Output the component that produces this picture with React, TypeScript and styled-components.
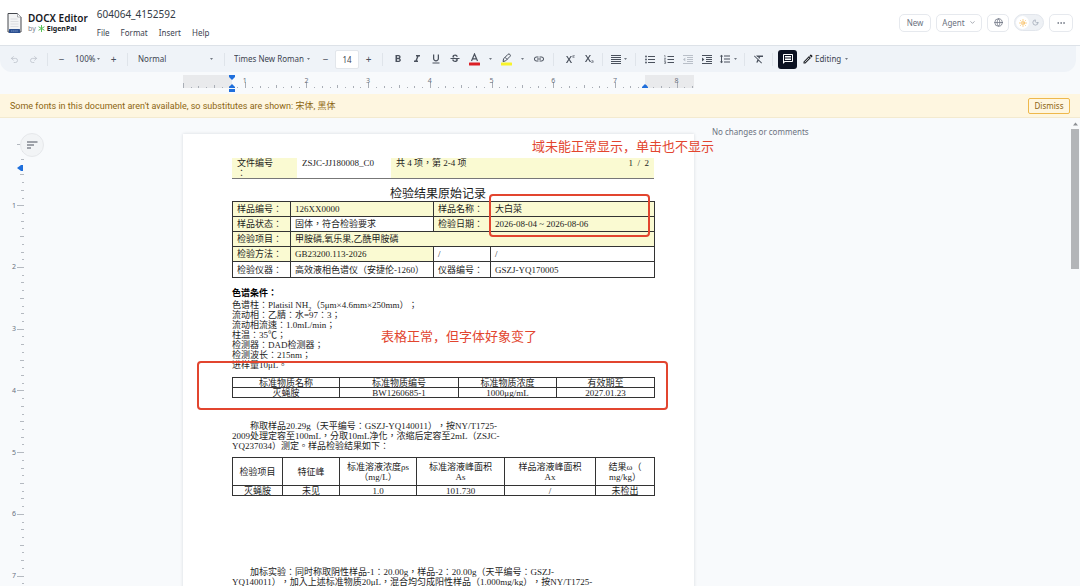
import React from "react";
import styled, { createGlobalStyle, css } from "styled-components";
import {
  MdFormatBold,
  MdFormatItalic,
  MdFormatUnderlined,
  MdStrikethroughS,
  MdLink,
  MdSuperscript,
  MdSubscript,
  MdFormatLineSpacing,
  MdFormatClear,
  MdOutlineMessage,
  MdOutlineEdit,
} from "react-icons/md";
import { Globe, Sun, Moon, Ellipsis, ChevronDown, Undo2, Redo2 } from "lucide-react";

const ui = `"Noto Sans", "Noto Sans CJK SC", sans-serif`;
const serif = `"Liberation Serif", "Noto Sans CJK TC", serif`;

const GlobalStyle = createGlobalStyle`
  *, *::before, *::after { box-sizing: border-box; }
  body { margin: 0; background: #f8fafc; font-family: ${ui}; font-size: 8px; color: #3c4350; }
  button, input, select { font: inherit; color: inherit; margin: 0; padding: 0; border: 0; background: none; }
  h1, h2, p { margin: 0; font-weight: normal; }
`;

const Shell = styled.div`
  display: flex;
  flex-direction: column;
  height: 100vh;
  overflow: hidden;
`;

/* ---------- title bar ---------- */

const TitleBar = styled.header`
  display: flex;
  align-items: center;
  justify-content: space-between;
  height: 46px;
  padding: 0 7px 0 7px;
  background: #fff;
  border-bottom: 1px solid #dde2e8;
`;

const Row = styled.div<{ $gap?: number }>`
  display: flex;
  align-items: center;
  gap: ${(p) => p.$gap ?? 0}px;
`;

const Brand = styled.a`
  display: flex;
  align-items: center;
  gap: 6px;
  color: #16181d;
  text-decoration: none;
`;

const BrandText = styled.span`
  display: flex;
  flex-direction: column;
`;

const BrandName = styled.strong`
  font-size: 10px;
  line-height: 12px;
  font-weight: 600;
  white-space: nowrap;
`;

const Byline = styled.span`
  display: flex;
  align-items: center;
  gap: 2px;
  font-size: 7px;
  line-height: 10px;
  color: #7b828e;

  b {
    color: #16181d;
  }
`;

const FileBlock = styled.div`
  display: flex;
  flex-direction: column;
  gap: 7px;
`;

const FileName = styled.h1`
  font-size: 10px;
  line-height: 14px;
  color: #333a45;
`;

const Menu = styled.nav`
  display: flex;
  gap: 11px;
  line-height: 10px;
`;

const MenuButton = styled.button`
  line-height: 10px;
`;

const PillButton = styled.button<{ $w: number }>`
  display: flex;
  align-items: center;
  justify-content: center;
  gap: 4px;
  width: ${(p) => p.$w}px;
  height: 18px;
  border: 1px solid #e6e9ee;
  border-radius: 5px;
  background: #fff;
  color: #6b7280;
`;

const ThemeSwitch = styled.div`
  display: flex;
  align-items: center;
  width: 30px;
  height: 17px;
  padding: 1px;
  border: 1px solid #e2e6ec;
  border-radius: 9px;
  background: #eef1f5;
`;

const ThemeButton = styled.button<{ $on?: boolean }>`
  display: flex;
  align-items: center;
  justify-content: center;
  width: 14px;
  height: 13px;
  border-radius: 7px;
  background: ${(p) => (p.$on ? "#fff" : "transparent")};
  color: ${(p) => (p.$on ? "#f5a524" : "#8a94a3")};
`;

/* ---------- toolbar ---------- */

const Toolbar = styled.div`
  display: flex;
  align-items: center;
  height: 26px;
  margin-right: 4px;
  padding-left: 5px;
  border-radius: 0 0 12px 12px;
  background: #eff3f8;
`;

const Group = styled.div<{ $pad?: number }>`
  display: flex;
  align-items: center;
  padding: 0 ${(p) => p.$pad ?? 0}px;
`;

const Divider = styled.span`
  width: 1px;
  height: 13px;
  margin: 0 4px;
  background: #dfe4ea;
`;

const ToolButton = styled.button<{ $w?: number; $active?: boolean }>`
  display: flex;
  flex: none;
  align-items: center;
  justify-content: center;
  gap: 3px;
  width: ${(p) => p.$w ?? 19}px;
  height: 19px;
  border-radius: 3px;
  font-size: 10px;
  color: #4a515d;

  &:disabled {
    color: #b9bfc8;
  }

  ${(p) =>
    p.$active &&
    css`
      background: #0c1222;
      color: #fff;
    `}
`;

const SelectBox = styled.label<{ $w: number; $pad?: number; $end?: number }>`
  display: flex;
  flex: none;
  align-items: center;
  gap: 1px;
  width: ${(p) => p.$w}px;
  height: 19px;
  padding: 0 ${(p) => p.$end ?? 4}px 0 ${(p) => p.$pad ?? 6}px;

  select {
    flex: 1;
    min-width: 0;
    appearance: none;
    outline: none;
    line-height: 12px;
  }
`;

const SizeInput = styled.input`
  width: 24px;
  height: 19px;
  border: 1px solid #e2e6eb;
  border-radius: 2px;
  background: #fff;
  text-align: center;
`;

const Caret = () => (
  <svg width="3" height="2" viewBox="0 0 4 2" aria-hidden="true">
    <path d="M0 0h4L2 2z" fill="#4a515d" />
  </svg>
);

/* ---------- rulers ---------- */

const PageGrid = styled.div`
  display: grid;
  grid-template-columns: minmax(24px, 183fr) 511px minmax(0, 386fr);
`;

const RulerBar = styled(PageGrid)`
  height: 22px;
  flex: none;
  padding-top: 3px;

  svg {
    grid-column: 2;
    overflow: visible;
  }
`;

const INCH = 61.7;

const HorizontalRuler = () => (
  <svg width="511" height="18" role="img" aria-label="Horizontal ruler">
    <rect x="0" y="0" width="49" height="13" fill="#e9eaec" />
    <rect x="462" y="0" width="49" height="13" fill="#e9eaec" />
    {Array.from({ length: 67 }, (_, i) => {
      const h = i % 8 === 0 ? (i === 0 ? 5 : 6) : i % 4 === 0 ? 3 : i % 2 === 0 ? 2 : 1;
      return (
        <rect key={i} x={Math.round((i * INCH) / 8)} y={13 - h} width="1" height={h} fill="#a9aeb6" />
      );
    })}
    {[1, 2, 3, 4, 5, 6, 7, 8].map((n) => (
      <text key={n} x={n * INCH} y="8" fontSize="7" textAnchor="middle" fill="#6b7280">
        {n}
      </text>
    ))}
    <path d="M46 0h6v2l-3 3-3-3z" fill="#1f6fdc" />
    <path d="M49 9l3 3v1h-6v-1z" fill="#1f6fdc" />
    <rect x="46" y="14" width="6" height="3" fill="#1f6fdc" />
    <path d="M462 9l3 3v1h-6v-1z" fill="#1f6fdc" />
  </svg>
);

const VerticalRuler = () => (
  <svg width="24" height="468" role="img" aria-label="Vertical ruler">
    {Array.from({ length: 58 }, (_, i) => {
      const w = i % 8 === 0 ? 7 : i % 4 === 0 ? 4 : i % 2 === 0 ? 3 : 2;
      return i === 3 ? null : (
        <rect key={i} x={24 - w} y={Math.round(25.600 + (i * INCH) / 8)} width={w} height="1" fill="#b4b9c0" />
      );
    })}
    {[1, 2, 3, 4, 5, 6, 7].map((n) => (
      <text key={n} x="14" y={28 + n * INCH} fontSize="7" textAnchor="middle" fill="#6b7280">
        {n}
      </text>
    ))}
    <path d="M17 50l4-3h2v6h-2z" fill="#1f6fdc" />
  </svg>
);

/* ---------- notice ---------- */

const Notice = styled.div`
  display: flex;
  flex: none;
  align-items: center;
  justify-content: space-between;
  height: 24px;
  padding: 0 10px;
  background: #fef6e0;
  border-bottom: 1px solid #f3ead0;
  color: #8c6510;
`;

const NoticeText = styled.span`
  font-family: Roboto, "Noto Sans CJK SC", sans-serif;
  font-size: 9px;
  line-height: 12px;
`;

const DismissButton = styled.button`
  width: 42px;
  height: 16px;
  border: 1px solid #eeb84c;
  border-radius: 2px;
`;

/* ---------- workspace ---------- */

const Workspace = styled.main`
  position: relative;
  flex: 1;
  min-height: 0;
  overflow: hidden;
`;

const RulerColumn = styled.div`
  position: relative;
`;

const OutlineButton = styled.button`
  position: absolute;
  top: 15px;
  left: 20px;
  display: flex;
  align-items: center;
  justify-content: center;
  width: 24px;
  height: 24px;
  border: 1px solid #e6e8eb;
  border-radius: 50%;
  background: #f2f4f6;
`;

const Page = styled.article`
  position: relative;
  margin-top: 16px;
  min-height: 720px;
  padding: 24px 40px 0 49px;
  background: #fff;
  box-shadow: 0 0 3px rgba(40, 50, 70, 0.16);
  font-family: ${serif};
  font-size: 9px;
  line-height: 10px;
  color: #1c1c1c;
  text-spacing-trim: space-all;
`;

const Comments = styled.aside`
  padding: 8px 12px 0 18px;
  line-height: 12px;
  color: #6b7280;
`;

const ScrollTrack = styled.div`
  position: absolute;
  top: 0;
  right: 0;
  bottom: 0;
  display: flex;
  flex-direction: column;
  align-items: center;
  width: 10px;
  padding-top: 4px;
  gap: 3px;
`;

const ScrollThumb = styled.div`
  width: 8px;
  height: 140px;
  background: #b3b5b8;
`;

const Letterhead = styled.table`
  width: 422px;
  border-collapse: collapse;
  table-layout: fixed;
  border-bottom: 1px solid #777;

  td {
    height: 19px;
    padding: 0 5px;
    vertical-align: top;
    line-height: 10px;
  }
`;

const FormTable = styled.table`
  width: 423px;
  border-collapse: collapse;
  table-layout: fixed;
  text-align: left;

  td {
    height: 15px;
    padding: 0 4px;
    border: 1px solid #333;
    line-height: 10px;
    white-space: nowrap;
  }

  tr:last-child td {
    height: 16px;
  }
`;

const DataTable = styled.table<{ $head: number }>`
  width: 423px;
  border-collapse: collapse;
  table-layout: fixed;
  text-align: center;

  th,
  td {
    height: 10px;
    padding: 1px 0 0;
    border: 1px solid #333;
    font-weight: normal;
    line-height: 8px;
    white-space: nowrap;
  }

  thead th {
    height: ${(p) => p.$head}px;
    line-height: ${(p) => (p.$head > 10 ? 10 : 8)}px;
  }
`;

const Cell = styled.td<{ $fill?: boolean; $right?: boolean }>`
  background: ${(p) => (p.$fill ? "#fafad2" : "transparent")};
  text-align: ${(p) => (p.$right ? "right" : "inherit")};
`;

const DocTitle = styled.h1`
  padding: 8px 10px 0 0;
  font-size: 12px;
  line-height: 14px;
  text-align: center;
`;

const SectionTitle = styled.h2`
  padding-top: 10px;
  font-size: 9px;
  line-height: 10px;
  font-weight: bold;
  color: #000;
`;

const Paragraph = styled.p<{ $top: number; $indent?: boolean }>`
  padding-top: ${(p) => p.$top}px;
  text-indent: ${(p) => (p.$indent ? 18 : 0)}px;
  white-space: nowrap;

  sub {
    font-size: 6px;
    line-height: 0;
  }
`;

const Spacer = styled.div<{ $h: number }>`
  height: ${(p) => p.$h}px;
`;

const Note = styled.span<{ $x: number; $y: number }>`
  position: absolute;
  left: ${(p) => p.$x}px;
  top: ${(p) => p.$y}px;
  font-family: "Noto Sans CJK SC", sans-serif;
  font-size: 13px;
  line-height: 16px;
  white-space: nowrap;
  color: #e2452f;
`;

const Frame = styled.span<{ $x: number; $y: number; $w: number; $h: number }>`
  position: absolute;
  left: ${(p) => p.$x}px;
  top: ${(p) => p.$y}px;
  width: ${(p) => p.$w}px;
  height: ${(p) => p.$h}px;
  border: 2px solid #e2452f;
  border-radius: 4px;
`;

/* ---------- drawings ---------- */

const DocLogo = () => (
  <svg width="15" height="22" viewBox="0 0 15 22" aria-hidden="true">
    <path d="M1 1.500h9.500l3.500 3.500v15H1z" fill="#f3f4f5" stroke="#44474d" />
    <path d="M10.500 1.500V5H14" fill="#fff" stroke="#8b8e94" strokeWidth=".7" />
    <path d="M3.500 7h7M3.500 9.500h8M3.500 12h8M3.500 14.500h8" stroke="#d5d8dc" strokeWidth=".8" />
    <rect x="2" y="17" width="11" height="4" rx=".6" fill="#2b4f8f" />
    <path d="M4 19h7" stroke="#7f9bcf" strokeWidth="1" strokeDasharray="1.500 .6" />
  </svg>
);

const Asterisk = () => (
  <svg width="7" height="7" viewBox="0 0 8 8" aria-hidden="true">
    <path d="M4 .5v7M1 2.200l6 3.600M7 2.200L1 5.800" stroke="#4fc04f" strokeWidth="1.100" strokeLinecap="round" />
  </svg>
);

const TextColor = () => (
  <svg width="11" height="13" viewBox="0 0 11 13" aria-hidden="true">
    <path d="M2.500 8L5.500 1l3 7M3.500 5.800h4" fill="none" stroke="#4a515d" strokeWidth="1.200" />
    <rect x="0" y="9.500" width="11" height="3" rx=".5" fill="#dc1f26" />
  </svg>
);

const Highlighter = () => (
  <svg width="11" height="13" viewBox="0 0 11 13" aria-hidden="true">
    <rect x="0" y="9.500" width="11" height="3" rx=".5" fill="#f8f32b" />
    <path
      d="M2 8.500l.6-2.700L7 1.300q.9-.8 1.900.1t.2 1.900L4.600 7.900zM4 4.300L6.200 6.500"
      fill="none"
      stroke="#4a515d"
      strokeWidth="1"
      strokeLinejoin="round"
    />
  </svg>
);

const LineIcon = ({ d, children }: { d: string; children?: React.ReactNode }) => (
  <svg width="10" height="9" viewBox="0 0 10 9" aria-hidden="true" fill="currentColor">
    <path d={d} stroke="currentColor" strokeWidth="1" />
    {children}
  </svg>
);

const JustifyIcon = () => <LineIcon d="M0 .5h10M0 2.500h10M0 4.500h10M0 6.500h10M0 8.500h10" />;

const BulletIcon = () => (
  <LineIcon d="M3 1.500h7M3 4.500h7M3 7.500h7">
    <circle cx="1" cy="1.500" r=".9" />
    <circle cx="1" cy="4.500" r=".9" />
    <circle cx="1" cy="7.500" r=".9" />
  </LineIcon>
);

const NumberIcon = () => (
  <LineIcon d="M3.500 1.500H10M3.500 4.500H10M3.500 7.500H10">
    <path
      d="M.3.4h.7v2.200M.2 3.500h1.400L.3 5.300h1.500M.2 6.500h1.400v2H.2M.6 7.500h1"
      fill="none"
      stroke="currentColor"
      strokeWidth=".6"
    />
  </LineIcon>
);

const OutdentIcon = () => (
  <LineIcon d="M0 .5h10M4 2.500h6M4 4.500h6M4 6.500h6M0 8.500h10">
    <path d="M2.300 2.500v4L0 4.500z" />
  </LineIcon>
);

const IndentIcon = () => (
  <LineIcon d="M0 .5h10M4 2.500h6M4 4.500h6M4 6.500h6M0 8.500h10">
    <path d="M0 2.500v4l2.300-2z" />
  </LineIcon>
);

const OutlineIcon = () => (
  <svg width="11" height="8" viewBox="0 0 11 8" aria-hidden="true">
    <path d="M0 1h10.500M0 4h7M0 7h4" stroke="#4a515d" strokeWidth="1.200" />
  </svg>
);

export default function App() {
  return (
    <Shell>
      <GlobalStyle />
      <TitleBar>
        <Row $gap={9}>
          <Brand href="#">
            <DocLogo />
            <BrandText>
              <BrandName>DOCX Editor</BrandName>
              <Byline>
                by <Asterisk /> <b>EigenPal</b>
              </Byline>
            </BrandText>
          </Brand>
          <FileBlock>
            <FileName>604064_4152592</FileName>
            <Menu>
              <MenuButton>File</MenuButton>
              <MenuButton>Format</MenuButton>
              <MenuButton>Insert</MenuButton>
              <MenuButton>Help</MenuButton>
            </Menu>
          </FileBlock>
        </Row>
        <Row $gap={5}>
          <PillButton $w={32}>New</PillButton>
          <PillButton $w={46}>
            Agent <ChevronDown size={7} />
          </PillButton>
          <PillButton $w={22} aria-label="Language">
            <Globe size={9} />
          </PillButton>
          <ThemeSwitch>
            <ThemeButton $on aria-label="Light theme">
              <Sun size={8} />
            </ThemeButton>
            <ThemeButton aria-label="Dark theme">
              <Moon size={7} />
            </ThemeButton>
          </ThemeSwitch>
          <PillButton $w={24} aria-label="More">
            <Ellipsis size={10} />
          </PillButton>
        </Row>
      </TitleBar>

      <Toolbar role="toolbar" aria-label="Formatting">
        <Group>
          <ToolButton disabled aria-label="Undo"><Undo2 size={9} /></ToolButton>
          <ToolButton disabled aria-label="Redo"><Redo2 size={9} /></ToolButton>
        </Group>
        <Divider />
        <Group>
          <ToolButton aria-label="Zoom out">−</ToolButton>
          <SelectBox $w={33} $pad={4}>
            <select aria-label="Zoom"><option>100%</option></select>
            <Caret />
          </SelectBox>
          <ToolButton aria-label="Zoom in">+</ToolButton>
        </Group>
        <Divider />
        <SelectBox $w={88} $end={7}>
          <select aria-label="Paragraph style"><option>Normal</option></select>
          <Caret />
        </SelectBox>
        <Divider />
        <Group>
          <SelectBox $w={87} $pad={5} $end={6}>
            <select aria-label="Font"><option>Times New Roman</option></select>
            <Caret />
          </SelectBox>
          <ToolButton aria-label="Decrease font size">−</ToolButton>
          <SizeInput aria-label="Font size" defaultValue="14" />
          <ToolButton aria-label="Increase font size">+</ToolButton>
        </Group>
        <Divider />
        <Group $pad={1}>
          <ToolButton aria-label="Bold"><MdFormatBold size={12} /></ToolButton>
          <ToolButton aria-label="Italic"><MdFormatItalic size={12} /></ToolButton>
          <ToolButton aria-label="Underline"><MdFormatUnderlined size={12} /></ToolButton>
          <ToolButton aria-label="Strikethrough"><MdStrikethroughS size={12} /></ToolButton>
          <ToolButton $w={20} aria-label="Text color"><TextColor /></ToolButton>
          <ToolButton $w={13} aria-label="Text color options"><Caret /></ToolButton>
          <ToolButton aria-label="Highlight"><Highlighter /></ToolButton>
          <ToolButton $w={13} aria-label="Highlight options"><Caret /></ToolButton>
          <ToolButton aria-label="Link"><MdLink size={12} /></ToolButton>
        </Group>
        <Divider />
        <Group $pad={1}>
          <ToolButton aria-label="Superscript"><MdSuperscript size={12} /></ToolButton>
          <ToolButton aria-label="Subscript"><MdSubscript size={12} /></ToolButton>
        </Group>
        <Divider />
        <ToolButton $w={24} aria-label="Alignment"><JustifyIcon /><Caret /></ToolButton>
        <Divider />
        <Group>
          <ToolButton aria-label="Bulleted list"><BulletIcon /></ToolButton>
          <ToolButton aria-label="Numbered list"><NumberIcon /></ToolButton>
          <ToolButton disabled aria-label="Decrease indent"><OutdentIcon /></ToolButton>
          <ToolButton aria-label="Increase indent"><IndentIcon /></ToolButton>
          <ToolButton $w={24} aria-label="Line spacing"><MdFormatLineSpacing size={12} /><Caret /></ToolButton>
        </Group>
        <Divider />
        <ToolButton aria-label="Clear formatting"><MdFormatClear size={12} /></ToolButton>
        <Divider />
        <Group $pad={1}>
          <ToolButton $active aria-label="Comments"><MdOutlineMessage size={12} /></ToolButton>
        </Group>
        <SelectBox $w={54} $pad={4}>
          <MdOutlineEdit size={12} color="#16181d" />
          <select aria-label="Mode"><option>Editing</option></select>
          <Caret />
        </SelectBox>
      </Toolbar>

      <RulerBar>
        <HorizontalRuler />
      </RulerBar>

      <Notice role="status">
        <NoticeText>
          Some fonts in this document aren't available, so substitutes are shown: 宋体, 黑体
        </NoticeText>
        <DismissButton>Dismiss</DismissButton>
      </Notice>

      <Workspace>
        <PageGrid>
          <RulerColumn>
            <VerticalRuler />
            <OutlineButton aria-label="Show outline"><OutlineIcon /></OutlineButton>
          </RulerColumn>
          <Page>
            <Letterhead>
              <colgroup>
                <col width="65" />
                <col width="94" />
                <col width="180" />
                <col />
              </colgroup>
              <tbody>
                <tr>
                  <Cell $fill>文件编号<br />：</Cell>
                  <Cell>ZSJC-JJ180008_C0</Cell>
                  <Cell $fill>共 4 项，第 2-4 项</Cell>
                  <Cell $fill $right>1&nbsp; /&nbsp; 2</Cell>
                </tr>
              </tbody>
            </Letterhead>
            <DocTitle>检验结果原始记录</DocTitle>
            <FormTable>
              <colgroup>
                <col width="58" />
                <col width="143" />
                <col width="57" />
                <col />
              </colgroup>
              <tbody>
                <tr>
                  <Cell $fill>样品编号：</Cell>
                  <Cell $fill>126XX0000</Cell>
                  <Cell $fill>样品名称：</Cell>
                  <Cell $fill>大白菜</Cell>
                </tr>
                <tr>
                  <Cell $fill>样品状态：</Cell>
                  <Cell>固体，符合检验要求</Cell>
                  <Cell $fill>检验日期：</Cell>
                  <Cell $fill>2026-08-04 ~ 2026-08-06</Cell>
                </tr>
                <tr>
                  <Cell $fill>检验项目：</Cell>
                  <Cell $fill colSpan={3}>甲胺磷,氧乐果,乙酰甲胺磷</Cell>
                </tr>
                <tr>
                  <Cell $fill>检验方法：</Cell>
                  <Cell $fill>GB23200.113-2026</Cell>
                  <Cell>/</Cell>
                  <Cell>/</Cell>
                </tr>
                <tr>
                  <Cell>检验仪器：</Cell>
                  <Cell>高效液相色谱仪（安捷伦-1260）</Cell>
                  <Cell>仪器编号：</Cell>
                  <Cell>GSZJ-YQ170005</Cell>
                </tr>
              </tbody>
            </FormTable>
            <SectionTitle>色谱条件：</SectionTitle>
            <Paragraph $top={2}>
              色谱柱：Platisil NH<sub>2</sub>（5μm×4.6mm×250mm）；<br />
              流动相：乙腈：水=97：3；<br />
              流动相流速：1.0mL/min；<br />
              柱温：35℃；<br />
              检测器：DAD检测器；<br />
              检测波长：215nm；<br />
              进样量10μL。
            </Paragraph>
            <Spacer $h={7} />
            <DataTable $head={10}>
              <colgroup>
                <col width="107" />
                <col width="119" />
                <col width="98" />
                <col />
              </colgroup>
              <thead>
                <tr>
                  <th>标准物质名称</th>
                  <th>标准物质编号</th>
                  <th>标准物质浓度</th>
                  <th>有效期至</th>
                </tr>
              </thead>
              <tbody>
                <tr>
                  <td>灭蝇胺</td>
                  <td>BW1260685-1</td>
                  <td>1000μg/mL</td>
                  <td>2027.01.23</td>
                </tr>
              </tbody>
            </DataTable>
            <Paragraph $top={23} $indent>
              称取样品20.29g（天平编号：GSZJ-YQ140011），按NY/T1725-<br />
              2009处理定容至100mL，分取10mL净化，浓缩后定容至2mL（ZSJC-<br />
              YQ237034）测定。样品检验结果如下：
            </Paragraph>
            <Spacer $h={6} />
            <DataTable $head={28}>
              <colgroup>
                <col width="50" />
                <col width="57" />
                <col width="77" />
                <col width="88" />
                <col width="91" />
                <col />
              </colgroup>
              <thead>
                <tr>
                  <th>检验项目</th>
                  <th>特征峰</th>
                  <th>标准溶液浓度ρs<br />（mg/L）</th>
                  <th>标准溶液峰面积<br />As</th>
                  <th>样品溶液峰面积<br />Ax</th>
                  <th>结果ω（<br />mg/kg）</th>
                </tr>
              </thead>
              <tbody>
                <tr>
                  <td>灭蝇胺</td>
                  <td>未见</td>
                  <td>1.0</td>
                  <td>101.730</td>
                  <td>/</td>
                  <td>未检出</td>
                </tr>
              </tbody>
            </DataTable>
            <Paragraph $top={71} $indent>
              加标实验：同时称取阴性样品-1：20.00g，样品-2：20.00g（天平编号：GSZJ-<br />
              YQ140011），加入上述标准物质20μL，混合均匀成阳性样品（1.000mg/kg），按NY/T1725-
            </Paragraph>

            <Note $x={349} $y={4}>域未能正常显示，单击也不显示</Note>
            <Note $x={198} $y={194}>表格正常，但字体好象变了</Note>
            <Frame $x={306} $y={60} $w={161} $h={43} />
            <Frame $x={14} $y={227} $w={471} $h={49} />
          </Page>
          <Comments>No changes or comments</Comments>
        </PageGrid>
        <ScrollTrack aria-hidden="true">
          <svg width="5" height="4" viewBox="0 0 5 4">
            <path d="M0 3.500h5L2.500 .5z" fill="#8c8f94" />
          </svg>
          <ScrollThumb />
        </ScrollTrack>
      </Workspace>
    </Shell>
  );
}
